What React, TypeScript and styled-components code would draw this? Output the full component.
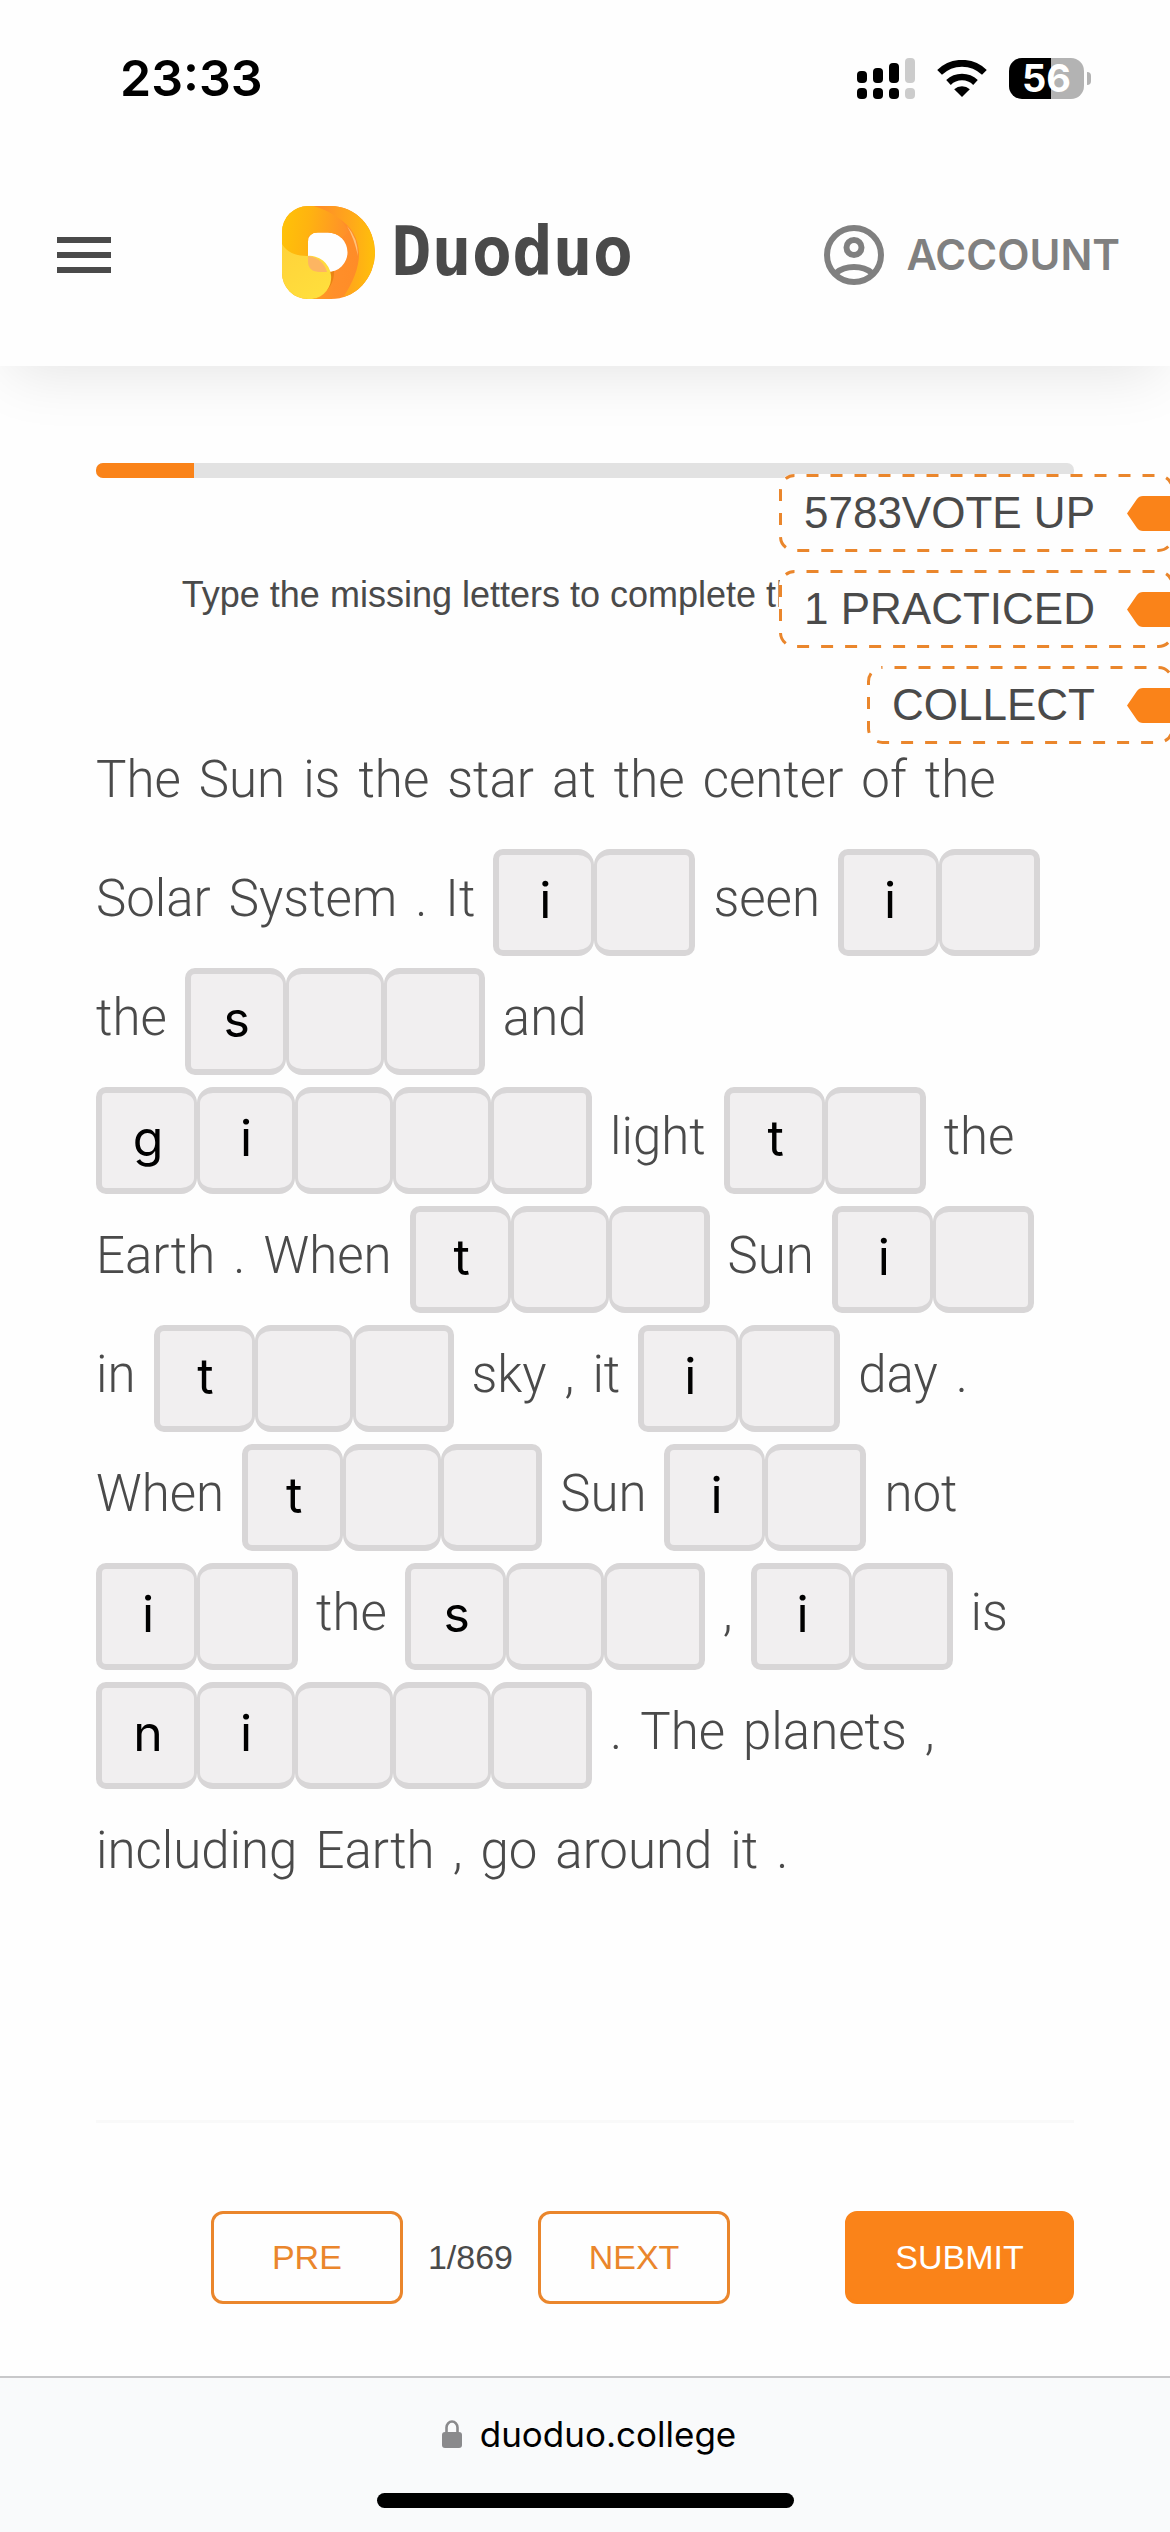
import React, { useState } from "react";
import styled, { createGlobalStyle } from "styled-components";

const colors = {
  page: "#fefefe",
  text: "#4a4a4a",
  muted: "#808080",
  accent: "#fa8319",
  outline: "#ea862c",
  track: "#e2e2e2",
  cell: "#f1eff0",
  cellEdge: "#d8d6d7",
};

const sans = '"Liberation Sans", Arial, sans-serif';
const system = 'Inter, "Liberation Sans", sans-serif';

const GlobalStyle = createGlobalStyle`
  *, *::before, *::after { box-sizing: border-box; }
  body { margin: 0; background: ${colors.page}; color: ${colors.text}; font-family: ${sans}; }
  button, input { font: inherit; }
`;

const Page = styled.div`
  display: flex;
  flex-direction: column;
  min-height: 100vh;
  overflow: hidden;
`;

const TopArea = styled.div`
  background: ${colors.page};
  box-shadow: 0 18px 56px -10px rgba(0, 0, 0, 0.1);
`;

const StatusBar = styled.div`
  display: flex;
  align-items: center;
  justify-content: space-between;
  padding: 48px 86px 24px 120px;
  color: #000;
  font: 600 50px/60px ${system};
`;

const StatusIcons = styled.div`
  display: flex;
  align-items: center;
  gap: 22px;
`;

const Battery = styled.div`
  position: relative;
  display: flex;
  align-items: center;
  justify-content: center;
  width: 75px;
  height: 41px;
  border-radius: 13px;
  background: linear-gradient(to right, #000 56%, #b3b3b3 56%);
  color: #fff;
  font: 700 38px/41px ${system};

  &::after {
    content: "";
    position: absolute;
    left: 78px;
    top: 14px;
    width: 4px;
    height: 13px;
    border-radius: 0 4px 4px 0;
    background: #b3b3b3;
  }
`;

const Header = styled.header`
  display: flex;
  align-items: center;
  justify-content: space-between;
  padding: 52px 50px 46px 57px;
`;

const MenuButton = styled.button`
  display: flex;
  flex-direction: column;
  gap: 9px;
  width: 54px;
  padding: 6px 0 0;
  border: 0;
  background: none;

  span { height: 6px; background: ${colors.text}; }
`;

const Brand = styled.a`
  display: flex;
  align-items: center;
  gap: 16px;
  padding-right: 20px;
  color: ${colors.text};
  font: 700 67px/136px "DejaVu Sans Mono", monospace;
  text-decoration: none;
`;

const AccountButton = styled.button`
  display: flex;
  align-items: center;
  gap: 22px;
  padding: 6px 0 0;
  border: 0;
  background: none;
  color: ${colors.muted};
  font: 600 42px/60px ${system};
`;

const Main = styled.main`
  position: relative;
  flex: 1;
  padding: 97px 96px 72px;
`;

const Progress = styled.div`
  height: 15px;
  border-radius: 7px;
  background: ${colors.track};
  overflow: hidden;
`;

const ProgressFill = styled.div`
  height: 100%;
  background: ${colors.accent};
`;

const Instruction = styled.p`
  margin: 90px 0 108px;
  font-size: 36px;
  line-height: 54px;
  text-align: center;
`;

const Passage = styled.div`
  display: flex;
  flex-wrap: wrap;
  gap: 12px 18px;
  font: 300 51px/99px Roboto, ${sans};
`;

const Word = styled.span`
  height: 107px;
`;

const Blank = styled.span`
  display: flex;
`;

const LetterCell = styled.input`
  width: 98px;
  height: 107px;
  padding: 0 0 6px;
  border: solid ${colors.cellEdge};
  border-width: 6px 3px;
  border-radius: 16px;
  outline: 0;
  background: ${colors.cell};
  color: #000;
  font: 400 50px/60px ${system};
  text-align: center;

  &:first-child {
    width: 101px;
    border-left-width: 6px;
    border-radius: 10px 16px 16px 10px;
  }
  &:last-child {
    width: 101px;
    border-right-width: 6px;
    border-radius: 16px 10px 10px 16px;
  }
`;

const Tags = styled.div`
  position: absolute;
  top: 108px;
  right: -4px;
  display: flex;
  flex-direction: column;
  align-items: flex-end;
  gap: 18px;
`;

const Tag = styled.button`
  position: relative;
  display: flex;
  align-items: center;
  gap: 32px;
  height: 78px;
  padding: 0 0 0 25px;
  border: 0;
  border-radius: 15px;
  background: ${colors.page};
  color: ${colors.text};
  font-size: 44px;
  line-height: 78px;
`;

const DashedEdge = styled.svg`
  position: absolute;
  inset: 0;
  width: 100%;
  height: 100%;
  overflow: visible;

  rect { x: 1.5px; y: 1.5px; width: calc(100% - 3px); height: 75px; }
`;

const Actions = styled.div`
  display: flex;
  align-items: center;
  justify-content: flex-end;
  gap: 115px;
  margin-top: 212px;
  padding-top: 88px;
  border-top: 3px solid #f9f9f9;
`;

const Pager = styled.div`
  display: flex;
  align-items: center;
  gap: 25px;
  font-size: 34px;
`;

const ActionButton = styled.button<{ $filled?: boolean }>`
  width: ${(p) => (p.$filled ? 229 : 192)}px;
  height: 93px;
  padding: 0;
  border: 3px solid ${(p) => (p.$filled ? colors.accent : colors.outline)};
  border-radius: 12px;
  background: ${(p) => (p.$filled ? colors.accent : "transparent")};
  color: ${(p) => (p.$filled ? "#fff" : colors.outline)};
  font-size: 34px;
`;

const BrowserBar = styled.footer`
  display: flex;
  flex-direction: column;
  align-items: center;
  gap: 35px;
  padding: 32px 0 24px;
  border-top: 2px solid #c8c8ca;
  background: #f9fafb;
`;

const Address = styled.div`
  display: flex;
  align-items: center;
  gap: 18px;
  padding-left: 8px;
  color: #000;
  font: 400 35px/48px ${system};
`;

const HomeIndicator = styled.div`
  width: 417px;
  height: 15px;
  border-radius: 8px;
  background: #000;
`;

function SignalIcon() {
  const bars = [
    { top: 13, height: 12, fill: "#000" },
    { top: 10, height: 15, fill: "#000" },
    { top: 5, height: 20, fill: "#000" },
    { top: 0, height: 25, fill: "#ccc" },
  ];
  return (
    <svg width="58" height="41" aria-hidden="true">
      {bars.map((b, i) => (
        <g key={i} fill={b.fill}>
          <rect x={i * 16} y={b.top} width="10" height={b.height} rx="4" />
          <rect x={i * 16} y="30" width="10" height="11" rx="4" />
        </g>
      ))}
    </svg>
  );
}

function WifiIcon() {
  return (
    <svg width="50" height="37" viewBox="0 0 50 37" aria-hidden="true">
      <path d="M25 37 L17.2 29.2 A11.5 11.5 0 0 1 32.8 29.2 Z" />
      <path d="M11.5 22.5 A19.5 19.5 0 0 1 38.5 22.5" fill="none" stroke="#000" strokeWidth="6.6" />
      <path d="M2.6 12.4 A32 32 0 0 1 47.4 12.4" fill="none" stroke="#000" strokeWidth="6.8" />
    </svg>
  );
}

function LogoMark() {
  return (
    <svg width="93" height="93" viewBox="0 0 93 93" aria-hidden="true">
      <defs>
        <linearGradient id="ring" x1="0" y1="0" x2="1" y2="0">
          <stop offset="0" stopColor="#ffb60f" />
          <stop offset="0.55" stopColor="#ff8f2a" />
          <stop offset="1" stopColor="#ff8a25" />
        </linearGradient>
        <linearGradient id="rim" x1="0" y1="0" x2="1" y2="0">
          <stop offset="0" stopColor="#ff8a2a" />
          <stop offset="0.6" stopColor="#ffa81a" />
          <stop offset="1" stopColor="#ffc00a" />
        </linearGradient>
        <linearGradient id="top" x1="0" y1="0.3" x2="1" y2="0.4">
          <stop offset="0" stopColor="#ffc208" />
          <stop offset="0.4" stopColor="#ffb310" />
          <stop offset="1" stopColor="#ff8f2a" />
        </linearGradient>
        <linearGradient id="drop" x1="0" y1="0" x2="0.6" y2="1">
          <stop offset="0" stopColor="#ffd23a" />
          <stop offset="1" stopColor="#ffde3c" />
        </linearGradient>
        <clipPath id="body">
          <path
            d="M26 0 H49 A44 46.5 0 0 1 49 93 H26 A26 26 0 0 1 0 67 V26 A26 26 0 0 1 26 0 Z M36 26.5 Q26 26.5 26 36 V66 H46 A19.5 19.75 0 0 0 46 26.5 Z"
            clipRule="evenodd"
          />
        </clipPath>
      </defs>
      <g clipPath="url(#body)">
        <rect width="93" height="93" fill="url(#ring)" />
        <path d="M0 0 H32 Q60 8 66 26 L60 32 L26 30 V54 H0 Z" fill="url(#top)" />
        <path d="M32 0 H93 V93 H60 Q77 68 77 48 Q76 24 56 12 Q46 4 32 0 Z" fill="url(#rim)" />
        <path d="M65 20 Q76 32 76 50 Q72 32 65 20 Z" fill="#ffc27a" />
        <path d="M46 64 H52 Q53 84 32 93 H24 Z" fill="#e98413" />
      </g>
      <path d="M0 38 Q7 50 25 50 A21.3 21.3 0 0 1 30 93 H26 A26 26 0 0 1 0 67 Z" fill="url(#drop)" />
      <path d="M26 50 Q41 52 45 66 H38 Q26 66 26 55 Z" fill="#fdb562" />
    </svg>
  );
}

function AccountIcon() {
  return (
    <svg width="60" height="60" viewBox="0 0 60 60" fill="none" stroke="currentColor" strokeWidth="6" aria-hidden="true">
      <circle cx="30" cy="30" r="27" />
      <circle cx="30" cy="22.5" r="7.5" />
      <path d="M12 48 Q19 42 30 42 T48 48" />
    </svg>
  );
}

function LockIcon() {
  return (
    <svg width="20" height="28" viewBox="0 0 20 28" aria-hidden="true">
      <rect x="0" y="12" width="20" height="16" rx="3" fill="#8a8a8c" />
      <path d="M4.5 13 V7.5 A5.5 6 0 0 1 15.5 7.5 V13" fill="none" stroke="#8a8a8c" strokeWidth="2.6" />
    </svg>
  );
}

function ArrowShape() {
  return (
    <svg width="47" height="35" viewBox="0 0 47 35" aria-hidden="true">
      <path d="M0 17.5 L10 3 Q12 0 16 0 H47 V35 H16 Q12 35 10 32 Z" fill={colors.accent} />
    </svg>
  );
}

function ActionTag({ label }: { label: string }) {
  return (
    <Tag type="button">
      <DashedEdge aria-hidden="true">
        <rect rx="14" fill="none" stroke={colors.outline} strokeWidth="3" strokeDasharray="12 12" strokeDashoffset="12" />
      </DashedEdge>
      <span>{label}</span>
      <ArrowShape />
    </Tag>
  );
}

function BlankWord({ given, length, index }: { given: string; length: number; index: number }) {
  const [letters, setLetters] = useState<string[]>(
    Array.from({ length }, (_, i) => given[i] ?? "")
  );
  return (
    <Blank role="group" aria-label={`Missing word ${index}`}>
      {letters.map((letter, i) => (
        <LetterCell
          key={i}
          value={letter}
          maxLength={1}
          readOnly={i < given.length}
          aria-label={`Word ${index}, letter ${i + 1}`}
          onChange={(e) => setLetters(letters.map((l, j) => (j === i ? e.target.value : l)))}
        />
      ))}
    </Blank>
  );
}

const passage =
  "The Sun is the star at the center of the Solar System . It i_ seen i_ the s__ and gi___ light t_ the Earth . When t__ Sun i_ in t__ sky , it i_ day . When t__ Sun i_ not i_ the s__ , i_ is ni___ . The planets , including Earth , go around it .";

export default function App() {
  const progress = 10;
  return (
    <>
      <GlobalStyle />
      <Page>
        <TopArea>
          <StatusBar>
            <span>23:33</span>
            <StatusIcons>
              <SignalIcon />
              <WifiIcon />
              <Battery>56</Battery>
            </StatusIcons>
          </StatusBar>
          <Header>
            <MenuButton type="button" aria-label="Menu">
              <span />
              <span />
              <span />
            </MenuButton>
            <Brand href="#">
              <LogoMark />
              Duoduo
            </Brand>
            <AccountButton type="button">
              <AccountIcon />
              ACCOUNT
            </AccountButton>
          </Header>
        </TopArea>
        <Main>
          <Progress role="progressbar" aria-label="Progress" aria-valuenow={progress} aria-valuemin={0} aria-valuemax={100}>
            <ProgressFill style={{ width: `${progress}%` }} />
          </Progress>
          <Instruction>Type the missing letters to complete the text below</Instruction>
          <Passage>
            {passage.split(" ").map((token, i) =>
              token.includes("_") ? (
                <BlankWord key={i} given={token.replace(/_/g, "")} length={token.length} index={i + 1} />
              ) : (
                <Word key={i}>{token}</Word>
              )
            )}
          </Passage>
          <Actions>
            <Pager>
              <ActionButton type="button">PRE</ActionButton>
              <span>1/869</span>
              <ActionButton type="button">NEXT</ActionButton>
            </Pager>
            <ActionButton type="button" $filled>SUBMIT</ActionButton>
          </Actions>
          <Tags>
            <ActionTag label="5783VOTE UP" />
            <ActionTag label="1 PRACTICED" />
            <ActionTag label="COLLECT" />
          </Tags>
        </Main>
        <BrowserBar>
          <Address>
            <LockIcon />
            duoduo.college
          </Address>
          <HomeIndicator />
        </BrowserBar>
      </Page>
    </>
  );
}
